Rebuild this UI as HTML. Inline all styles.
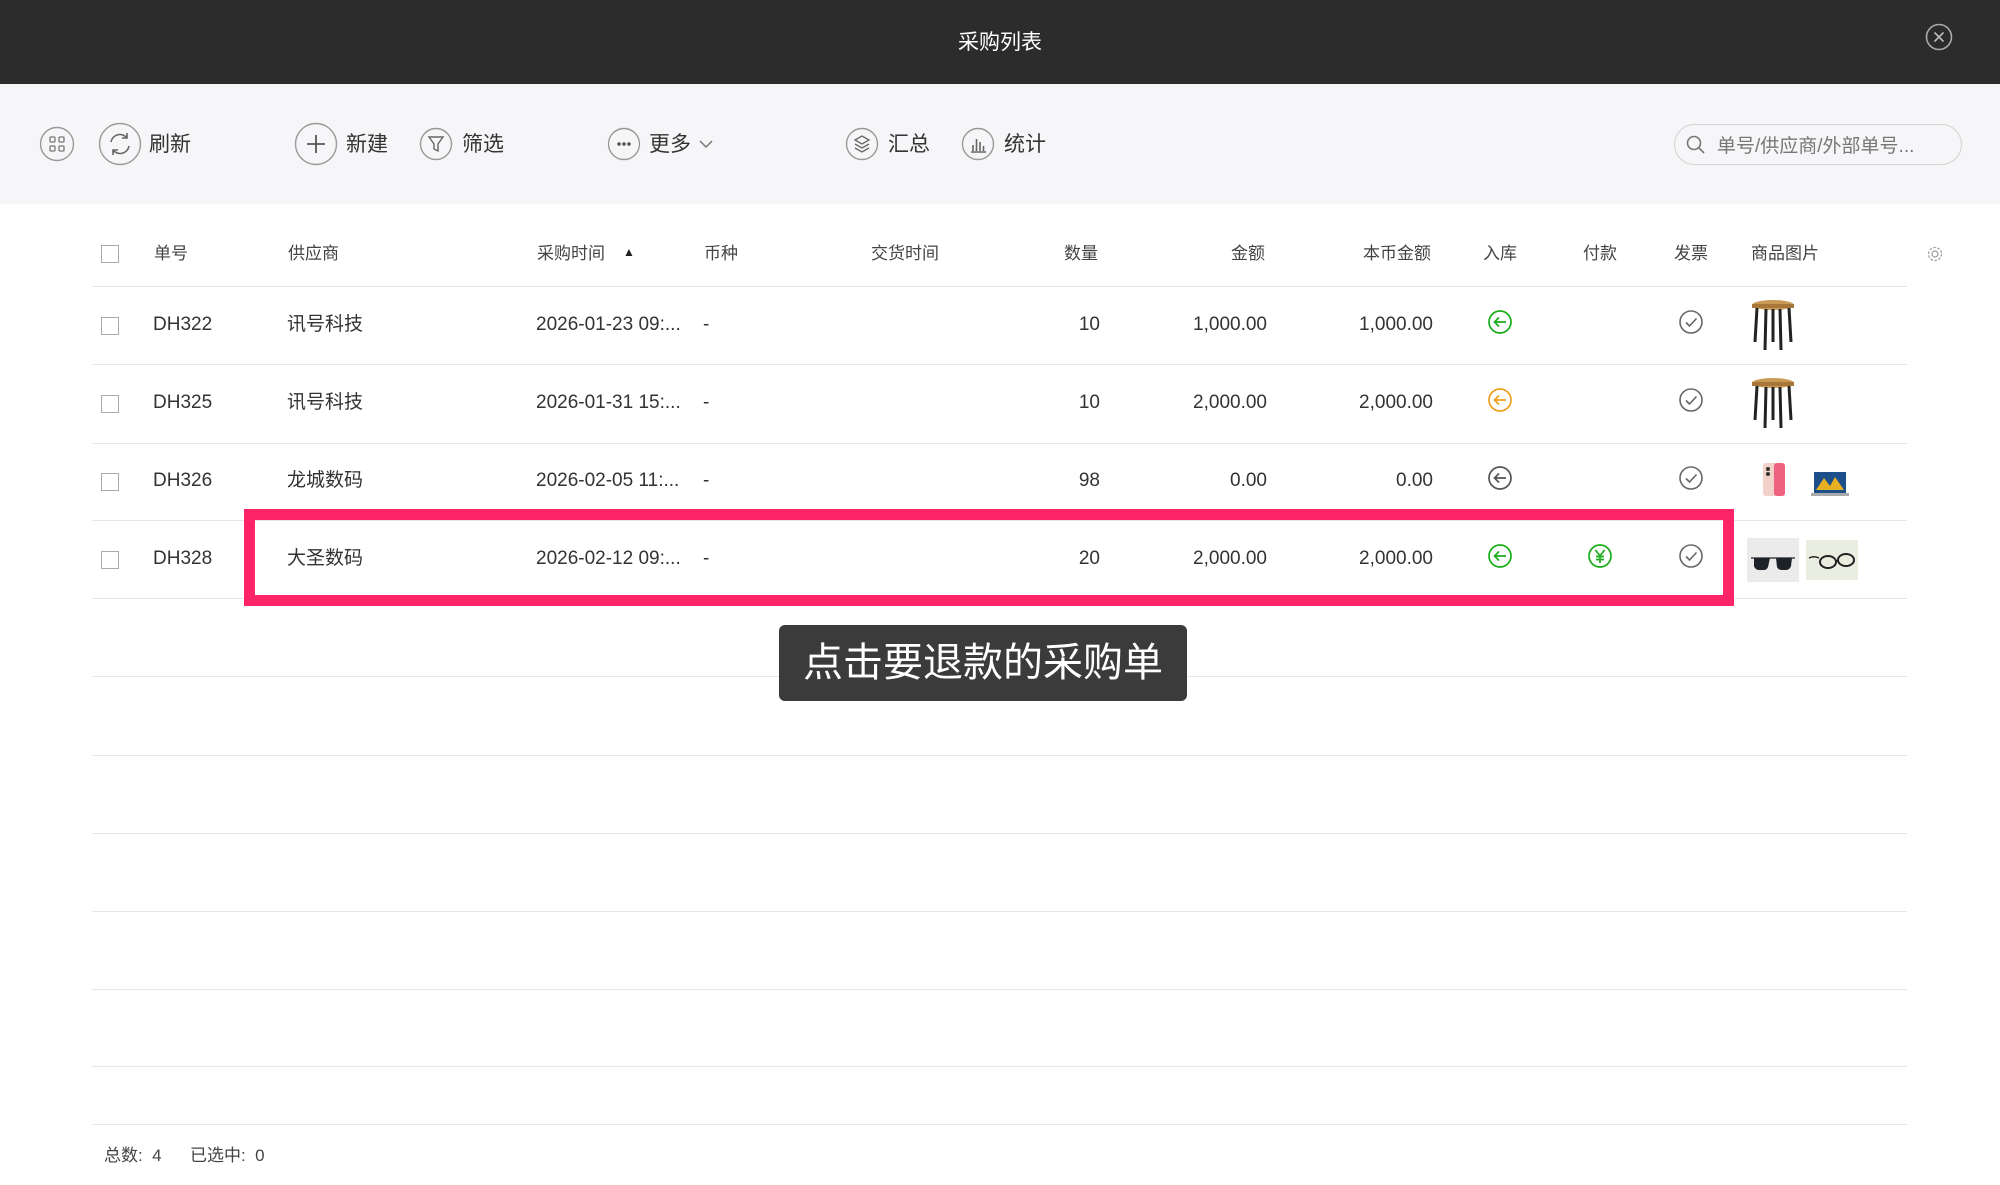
<!DOCTYPE html>
<html><head><meta charset="utf-8"><style>
*{margin:0;padding:0;box-sizing:border-box}
body{width:2000px;height:1185px;background:#fff;font-family:"Liberation Sans","Noto Sans CJK SC",sans-serif;color:#333;position:relative;overflow:hidden}
.a{position:absolute;white-space:nowrap}
.top{left:0;top:0;width:2000px;height:84px;background:#2c2c2c}
.tb{left:0;top:84px;width:2000px;height:120px;background:#f6f6f8}
.tt{font-size:21px;color:#333;top:128px}
.h{font-size:17px;color:#444;top:239px}
.c{font-size:19px;color:#333}
.line{position:absolute;left:92px;width:1815px;height:1px;background:#e6e6e6}
.cb{position:absolute;left:101px;width:18px;height:18px;border:1.5px solid #aaa;background:#fff}
.r{text-align:right}
</style></head><body>
<div class="a top"></div>
<div class="a" style="left:0;width:2000px;top:26px;text-align:center;color:#fff;font-size:21px">采购列表</div>
<svg class="a" style="left:1925px;top:23px" width="28" height="28" viewBox="0 0 28 28"><circle cx="14" cy="14" r="12.5" fill="none" stroke="#aaa" stroke-width="1.6"/><path d="M9.5 9.5l9 9M18.5 9.5l-9 9" stroke="#bbb" stroke-width="1.6"/></svg>
<div class="a tb"></div>
<svg class="a" style="left:39px;top:126px" width="36" height="36" viewBox="0 0 36 36"><circle cx="18" cy="18" r="16.5" fill="none" stroke="#999" stroke-width="1.4"/><g fill="none" stroke="#777" stroke-width="1.3"><rect x="11" y="11" width="5" height="5" rx="1"/><rect x="20" y="11" width="5" height="5" rx="1"/><rect x="11" y="20" width="5" height="5" rx="1"/><rect x="20" y="20" width="5" height="5" rx="1"/></g></svg>
<svg class="a" style="left:98px;top:122px" width="44" height="44" viewBox="0 0 44 44"><circle cx="22" cy="22" r="20.5" fill="none" stroke="#999" stroke-width="1.4"/><path d="M13 20a9 9 0 0 1 16-4M31 24a9 9 0 0 1-16 4" fill="none" stroke="#666" stroke-width="1.6"/><path d="M29 11v5h-5M15 33v-5h5" fill="none" stroke="#666" stroke-width="1.6"/></svg>
<div class="a tt" style="left:149px">刷新</div>
<svg class="a" style="left:294px;top:122px" width="44" height="44" viewBox="0 0 44 44"><circle cx="22" cy="22" r="20.5" fill="none" stroke="#999" stroke-width="1.4"/><path d="M22 13v18M13 22h18" stroke="#555" stroke-width="1.8"/></svg>
<div class="a tt" style="left:346px">新建</div>
<svg class="a" style="left:419px;top:127px" width="34" height="34" viewBox="0 0 34 34"><circle cx="17" cy="17" r="15.5" fill="none" stroke="#999" stroke-width="1.4"/><path d="M10 10h14l-5 7v7l-4-2v-5z" fill="none" stroke="#666" stroke-width="1.4"/></svg>
<div class="a tt" style="left:462px">筛选</div>
<svg class="a" style="left:607px;top:127px" width="34" height="34" viewBox="0 0 34 34"><circle cx="17" cy="17" r="15.5" fill="none" stroke="#999" stroke-width="1.4"/><circle cx="12" cy="17" r="1.8" fill="#555"/><circle cx="17" cy="17" r="1.8" fill="#555"/><circle cx="22" cy="17" r="1.8" fill="#555"/></svg>
<div class="a tt" style="left:649px">更多</div>
<svg class="a" style="left:698px;top:139px" width="16" height="10" viewBox="0 0 16 10"><path d="M2 2l6 6 6-6" fill="none" stroke="#777" stroke-width="1.5"/></svg>
<svg class="a" style="left:845px;top:127px" width="34" height="34" viewBox="0 0 34 34"><circle cx="17" cy="17" r="15.5" fill="none" stroke="#999" stroke-width="1.4"/><path d="M17 9l7 4-7 4-7-4z M10 17l7 4 7-4 M10 21l7 4 7-4" fill="none" stroke="#666" stroke-width="1.3"/></svg>
<div class="a tt" style="left:888px">汇总</div>
<svg class="a" style="left:961px;top:127px" width="34" height="34" viewBox="0 0 34 34"><circle cx="17" cy="17" r="15.5" fill="none" stroke="#999" stroke-width="1.4"/><path d="M12 24v-6M15.5 24v-12M19 24v-9M22.5 24v-5M10 25h15" stroke="#666" stroke-width="1.6"/></svg>
<div class="a tt" style="left:1004px">统计</div>
<div class="a" style="left:1674px;top:124px;width:288px;height:41px;border:1.5px solid #d2d2d2;border-radius:21px;background:#f6f6f8"></div>
<svg class="a" style="left:1685px;top:134px" width="22" height="22" viewBox="0 0 22 22"><circle cx="9" cy="9" r="6.5" fill="none" stroke="#777" stroke-width="1.6"/><path d="M14 14l5 5" stroke="#777" stroke-width="1.6"/></svg>
<div class="a" style="left:1717px;top:131px;font-size:19px;color:#777">单号/供应商/外部单号...</div>
<div class="cb" style="top:245px"></div>
<div class="a h" style="left:154px">单号</div>
<div class="a h" style="left:288px">供应商</div>
<div class="a h" style="left:537px">采购时间</div>
<div class="a" style="left:623px;top:245px;font-size:12px;color:#222">▲</div>
<div class="a h" style="left:704px">币种</div>
<div class="a h" style="left:871px">交货时间</div>
<div class="a h r" style="left:1000px;width:98px">数量</div>
<div class="a h r" style="left:1165px;width:100px">金额</div>
<div class="a h r" style="left:1300px;width:131px">本币金额</div>
<div class="a h" style="left:1483px">入库</div>
<div class="a h" style="left:1583px">付款</div>
<div class="a h" style="left:1674px">发票</div>
<div class="a h" style="left:1751px">商品图片</div>
<svg class="a" style="left:1926px;top:245px" width="18" height="18" viewBox="0 0 18 18"><circle cx="9" cy="9" r="3" fill="none" stroke="#999" stroke-width="1.2"/><circle cx="9" cy="9" r="6.5" fill="none" stroke="#999" stroke-width="1.2" stroke-dasharray="2.5 1.6"/></svg>
<div class="line" style="top:286px"></div>
<div class="line" style="top:364px"></div>
<div class="line" style="top:443px"></div>
<div class="line" style="top:520px"></div>
<div class="line" style="top:598px"></div>
<div class="line" style="top:676px"></div>
<div class="line" style="top:755px"></div>
<div class="line" style="top:833px"></div>
<div class="line" style="top:911px"></div>
<div class="line" style="top:989px"></div>
<div class="line" style="top:1066px"></div>
<div class="line" style="top:1124px"></div>

<div class="cb" style="top:317px"></div>
<div class="a c" style="left:153px;top:314px">DH322</div>
<div class="a c" style="left:287px;top:309px">讯号科技</div>
<div class="a c" style="left:536px;top:314px">2026-01-23 09:...</div>
<div class="a c" style="left:703px;top:314px">-</div>
<div class="a c r" style="left:1000px;width:100px;top:314px">10</div>
<div class="a c r" style="left:1150px;width:117px;top:314px">1,000.00</div>
<div class="a c r" style="left:1300px;width:133px;top:314px">1,000.00</div>

<div class="cb" style="top:395px"></div>
<div class="a c" style="left:153px;top:392px">DH325</div>
<div class="a c" style="left:287px;top:387px">讯号科技</div>
<div class="a c" style="left:536px;top:392px">2026-01-31 15:...</div>
<div class="a c" style="left:703px;top:392px">-</div>
<div class="a c r" style="left:1000px;width:100px;top:392px">10</div>
<div class="a c r" style="left:1150px;width:117px;top:392px">2,000.00</div>
<div class="a c r" style="left:1300px;width:133px;top:392px">2,000.00</div>

<div class="cb" style="top:473px"></div>
<div class="a c" style="left:153px;top:470px">DH326</div>
<div class="a c" style="left:287px;top:465px">龙城数码</div>
<div class="a c" style="left:536px;top:470px">2026-02-05 11:...</div>
<div class="a c" style="left:703px;top:470px">-</div>
<div class="a c r" style="left:1000px;width:100px;top:470px">98</div>
<div class="a c r" style="left:1150px;width:117px;top:470px">0.00</div>
<div class="a c r" style="left:1300px;width:133px;top:470px">0.00</div>

<div class="cb" style="top:551px"></div>
<div class="a c" style="left:153px;top:548px">DH328</div>
<div class="a c" style="left:287px;top:543px">大圣数码</div>
<div class="a c" style="left:536px;top:548px">2026-02-12 09:...</div>
<div class="a c" style="left:703px;top:548px">-</div>
<div class="a c r" style="left:1000px;width:100px;top:548px">20</div>
<div class="a c r" style="left:1150px;width:117px;top:548px">2,000.00</div>
<div class="a c r" style="left:1300px;width:133px;top:548px">2,000.00</div>

<svg width="0" height="0" style="position:absolute"><defs>
<g id="in"><circle cx="13" cy="13" r="11" fill="none" stroke="currentColor" stroke-width="1.7"/><path d="M19 13H8M12 8.5L7.5 13 12 17.5" fill="none" stroke="currentColor" stroke-width="1.7"/></g>
<g id="ok"><circle cx="13" cy="13" r="11" fill="none" stroke="#666" stroke-width="1.6"/><path d="M8 13.5l3.5 3.5 7-7.5" fill="none" stroke="#666" stroke-width="1.6"/></g>
</defs></svg>
<svg class="a" style="left:1487px;top:309px;color:#1aad19" width="26" height="26"><use href="#in"/></svg>
<svg class="a" style="left:1487px;top:387px;color:#f0a020" width="26" height="26"><use href="#in"/></svg>
<svg class="a" style="left:1487px;top:465px;color:#555" width="26" height="26"><use href="#in"/></svg>
<svg class="a" style="left:1487px;top:543px;color:#1aad19" width="26" height="26"><use href="#in"/></svg>
<svg class="a" style="left:1587px;top:543px" width="26" height="26" viewBox="0 0 26 26"><circle cx="13" cy="13" r="11" fill="none" stroke="#1aad19" stroke-width="1.7"/><path d="M8.5 7l4.5 6 4.5-6M13 13v7M9 13.5h8M9 16.5h8" fill="none" stroke="#1aad19" stroke-width="1.7"/></svg>
<svg class="a" style="left:1678px;top:309px" width="26" height="26"><use href="#ok"/></svg>
<svg class="a" style="left:1678px;top:387px" width="26" height="26"><use href="#ok"/></svg>
<svg class="a" style="left:1678px;top:465px" width="26" height="26"><use href="#ok"/></svg>
<svg class="a" style="left:1678px;top:543px" width="26" height="26"><use href="#ok"/></svg>

<svg class="a" style="left:1748px;top:298px" width="50" height="54" viewBox="0 0 50 54"><ellipse cx="25" cy="7" rx="21" ry="5" fill="#c99a55"/><rect x="4" y="6" width="42" height="4" fill="#a7773a"/><path d="M9 10L7 44M18 11L17 52M32 11L33 52M41 10L43 44M25 11v33" stroke="#222" stroke-width="3"/></svg>
<svg class="a" style="left:1748px;top:376px" width="50" height="54" viewBox="0 0 50 54"><ellipse cx="25" cy="7" rx="21" ry="5" fill="#c99a55"/><rect x="4" y="6" width="42" height="4" fill="#a7773a"/><path d="M9 10L7 44M18 11L17 52M32 11L33 52M41 10L43 44M25 11v33" stroke="#222" stroke-width="3"/></svg>
<svg class="a" style="left:1760px;top:462px" width="28" height="36" viewBox="0 0 28 36"><rect x="3" y="1" width="22" height="33" rx="3" fill="#f2d1c8"/><rect x="14" y="1" width="11" height="33" rx="3" fill="#f06080"/><circle cx="8" cy="7" r="2" fill="#333"/><circle cx="8" cy="12" r="2" fill="#333"/></svg>
<svg class="a" style="left:1810px;top:470px" width="40" height="28" viewBox="0 0 40 28"><rect x="4" y="2" width="32" height="21" fill="#1d4f8a"/><path d="M6 20l8-12 6 8 5-9 9 13z" fill="#e8b020"/><rect x="1" y="23" width="38" height="3" fill="#aaa"/></svg>
<div class="a" style="left:1747px;top:538px;width:52px;height:44px;background:#ebebeb"></div>
<svg class="a" style="left:1747px;top:538px" width="52" height="44" viewBox="0 0 52 44"><path d="M4 20h44" stroke="#444" stroke-width="1.5"/><path d="M7 20h16l-2 9a5 5 0 0 1-5 3h-4a5 5 0 0 1-5-4zM29 20h16l-1 8a5 5 0 0 1-5 4h-4a5 5 0 0 1-5-3z" fill="#1d2228"/></svg>
<div class="a" style="left:1806px;top:540px;width:52px;height:40px;background:#e9eee0"></div>
<svg class="a" style="left:1806px;top:540px" width="52" height="40" viewBox="0 0 52 40"><path d="M3 18c4-2 8-1 10 0" stroke="#222" stroke-width="1.5" fill="none"/><ellipse cx="22" cy="22" rx="8" ry="6" fill="none" stroke="#222" stroke-width="2"/><ellipse cx="40" cy="20" rx="8" ry="6" fill="none" stroke="#222" stroke-width="2"/><path d="M30 21h2" stroke="#222" stroke-width="2"/></svg>

<div class="a" style="left:244px;top:509px;width:1490px;height:97px;border:11px solid #fd2468"></div>
<div class="a" style="left:779px;top:625px;width:408px;height:76px;background:#3b3b3b;border-radius:6px;color:#fff;font-size:40px;line-height:76px;text-align:center">点击要退款的采购单</div>

<div class="a" style="left:104px;top:1141px;font-size:17px;color:#444">总数:&nbsp; 4 &nbsp;&nbsp;&nbsp;&nbsp; 已选中:&nbsp; 0</div>
</body></html>
